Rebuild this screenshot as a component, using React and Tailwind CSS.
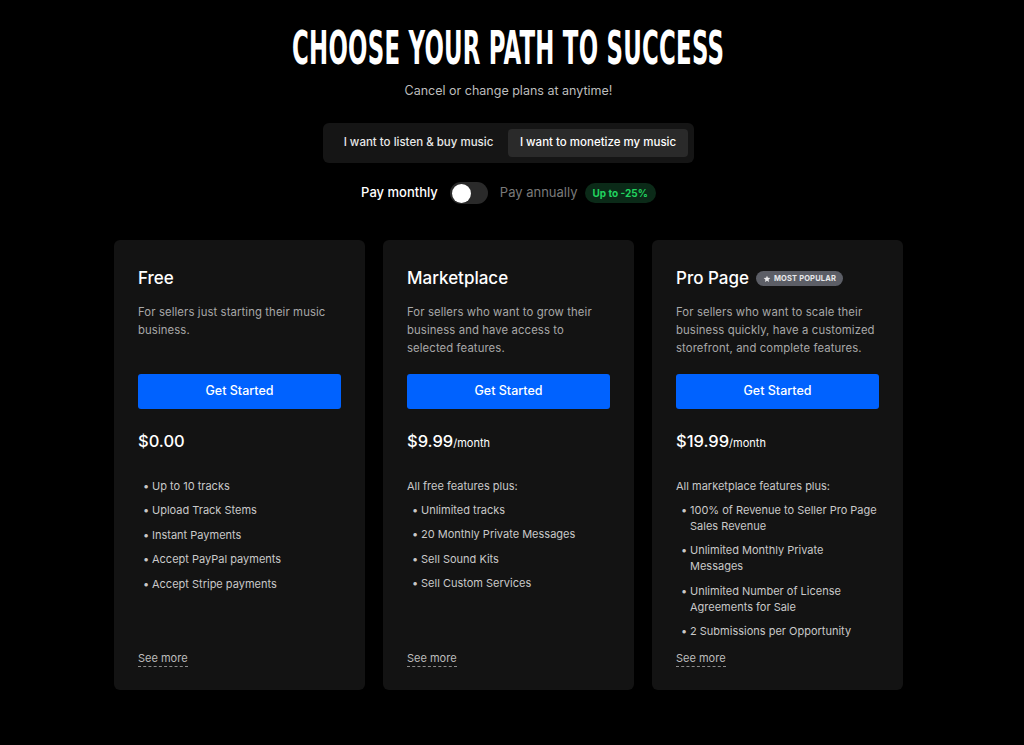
import React from "react";

const plans = [
  {
    name: "Free",
    desc: "For sellers just starting their music business.",
    price: "$0.00",
    per: false,
    intro: null,
    features: ["Up to 10 tracks", "Upload Track Stems", "Instant Payments", "Accept PayPal payments", "Accept Stripe payments"],
  },
  {
    name: "Marketplace",
    desc: "For sellers who want to grow their business and have access to\nselected features.",
    price: "$9.99",
    per: true,
    intro: "All free features plus:",
    features: ["Unlimited tracks", "20 Monthly Private Messages", "Sell Sound Kits", "Sell Custom Services"],
  },
  {
    name: "Pro Page",
    popular: true,
    desc: "For sellers who want to scale their business quickly, have a customized storefront, and complete features.",
    price: "$19.99",
    per: true,
    intro: "All marketplace features plus:",
    features: [
      "100% of Revenue to Seller Pro Page\nSales Revenue",
      "Unlimited Monthly Private\nMessages",
      "Unlimited Number of License\nAgreements for Sale",
      "2 Submissions per Opportunity",
    ],
  },
];

function Card({ p }) {
  return (
    <div className="flex min-h-[449px] w-[251px] flex-col rounded-md bg-[#131313] px-6 pt-[26px] pb-[24px]">
      <div className="flex items-center gap-[7px]">
        <h2 className="text-[17px] font-medium leading-[24px] text-white">{p.name}</h2>
        {p.popular && (
          <span className="mt-[1px] flex h-[15px] items-center gap-[3px] rounded-full bg-[#5c5e66] px-[7px] text-[7.5px] font-bold uppercase tracking-[0.02em] text-[#e8e8ea]">
            <svg width="8" height="8" viewBox="0 0 24 24" fill="currentColor">
              <path d="M12 2l2.9 6.6 7.1.6-5.4 4.7 1.6 7-6.2-3.7-6.2 3.7 1.6-7L2 9.2l7.1-.6z" />
            </svg>
            Most Popular
          </span>
        )}
      </div>
      <p className="mt-[13px] h-[54px] whitespace-pre-line text-[11.3px] leading-[18px] tracking-[0.01em] text-[#a8a8a8]">{p.desc}</p>
      <button className="mt-[17px] h-[35px] w-full rounded-[3px] bg-[#0062ff] text-[12.5px] font-medium text-white">Get Started</button>
      <div className="mt-[20px] flex items-baseline text-white">
        <span className="text-[16.5px] font-medium">{p.price}</span>
        {p.per && <span className="text-[11px]">/month</span>}
      </div>
      <div className="mt-[24px] flex flex-col gap-[8px] text-[11px] leading-[16px] text-[#c9c9c9]">
        {p.intro && <div>{p.intro}</div>}
        <ul className="flex flex-col gap-[8.5px]">
          {p.features.map((f) => (
            <li key={f} className="flex">
              <span className="w-[14px] shrink-0 pl-[5px]">•</span>
              <span className="whitespace-pre">{f}</span>
            </li>
          ))}
        </ul>
      </div>
      <div className="mt-auto pt-[11px] text-[11px] leading-[16px]">
        <span className="border-b border-dashed border-[#8a8a8a] pb-[1px] text-[#bdbdbd]">See more</span>
      </div>
    </div>
  );
}

export default function App() {
  return (
    <div className="min-h-[745px] w-full bg-black pr-[7px] pb-[56px]" style={{ fontFamily: "Inter, 'Noto Sans', sans-serif" }}>
      <div className="flex flex-col items-center">
        <h1
          className="mt-[26px] origin-center scale-x-[0.54] text-[47px] leading-[44px] font-bold tracking-[0.01em] whitespace-nowrap text-white"
          style={{ fontFamily: "'DejaVu Sans Condensed', 'DejaVu Sans', sans-serif" }}
        >
          CHOOSE YOUR PATH TO SUCCESS
        </h1>
        <p className="mt-[13px] text-[12.5px] leading-[16px] text-[#bdbdbd]">Cancel or change plans at anytime!</p>
        <div className="mt-[24px] flex h-[40px] w-[371px] items-center gap-0 rounded-md bg-[#151515] px-[6px]">
          <div className="flex h-[28px] flex-1 items-center justify-center text-[11.5px] font-medium text-[#e8e8e8]">I want to listen &amp; buy music</div>
          <div className="flex h-[28px] w-[180px] items-center justify-center rounded-[4px] bg-[#2a2a2a] text-[11.5px] font-medium text-white">I want to monetize my music</div>
        </div>
        <div className="mt-[19px] flex items-center">
          <span className="text-[13px] font-medium text-white">Pay monthly</span>
          <span className="ml-[12px] flex h-[22px] w-[38px] items-center rounded-full bg-[#2a2a2a] px-[2px]">
            <span className="h-[19px] w-[19px] rounded-full bg-white" />
          </span>
          <span className="ml-[12px] text-[13px] text-[#7a7a7a]">Pay annually</span>
          <span className="ml-[7px] flex h-[20px] items-center rounded-full bg-[#0b2a18] px-[8px] text-[10px] font-bold text-[#21d35f]">Up to -25%</span>
        </div>
      </div>
      <div className="mt-[36px] flex justify-center gap-[18px]">
        {plans.map((p) => (
          <Card key={p.name} p={p} />
        ))}
      </div>
    </div>
  );
}
